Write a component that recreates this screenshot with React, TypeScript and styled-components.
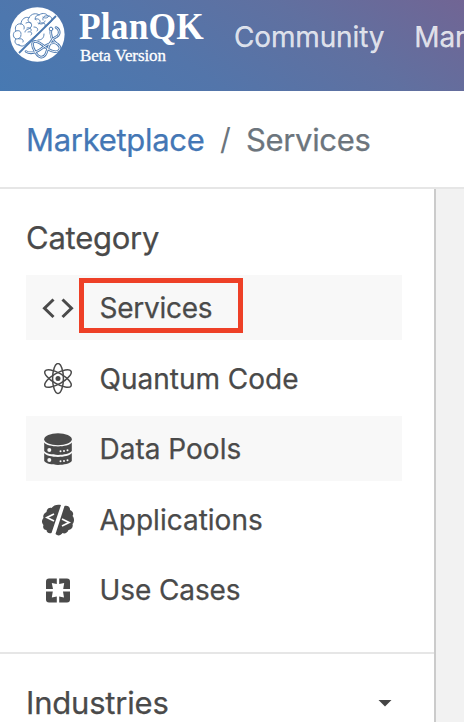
import React from 'react';
import styled, { createGlobalStyle } from 'styled-components';

const GlobalStyle = createGlobalStyle`
  * { box-sizing: border-box; }
  body { margin: 0; background: #fff; overflow: hidden; font-family: Inter, "Liberation Sans", sans-serif; color: #4a4a4a; }
`;

const Page = styled.div`
  width: 464px;
  height: 722px;
  overflow: hidden;
  display: flex;
  flex-direction: column;
`;

const Header = styled.header`
  height: 91px;
  flex: none;
  display: flex;
  align-items: flex-start;
  padding: 6px 0 0 9px;
  overflow: hidden;
  background: linear-gradient(34deg, #4779b2 0%, #5375aa 38%, #6070a0 68%, #716594 100%);
`;

const Brand = styled.div`
  width: 225px;
  flex: none;
  display: flex;
  color: #fff;
`;

const BrandText = styled.div`
  display: flex;
  flex-direction: column;
  padding-left: 14px;
  font-family: "Liberation Serif", serif;
  white-space: nowrap;
`;

const BrandName = styled.div`
  font-size: 38px;
  line-height: 40px;
  height: 40px;
  font-weight: 700;
  letter-spacing: 0.2px;
  transform: scaleX(0.93);
  transform-origin: left;
`;

const BrandNote = styled.div`
  padding-left: 1px;
  font-size: 17px;
  line-height: 20px;
  letter-spacing: -0.1px;
  -webkit-text-stroke: 0.3px #fff;
`;

const Label = styled.span<{ $size?: number; $spacing?: number }>`
  font-size: ${p => p.$size ?? 28}px;
  letter-spacing: ${p => p.$spacing ?? 0}px;
  -webkit-text-stroke: 0.25px currentColor;
  white-space: nowrap;
`;

const Nav = styled.nav`
  display: flex;
  flex: none;
  gap: 30px;
  line-height: 62px;
  color: rgba(255, 255, 255, 0.8);
`;

const Breadcrumb = styled.div`
  height: 98px;
  flex: none;
  display: flex;
  align-items: center;
  padding: 0 0 0 26px;
  border-bottom: 2px solid #e6e6e6;
  color: #6c757d;
`;

const Crumb = styled.a`
  width: 194px;
  color: #4477b5;
`;

const Slash = styled.span`
  width: 26px;
  font-size: 30px;
`;

const Body = styled.main`
  flex: 1;
  min-height: 0;
  display: flex;
  background: #f2f2f2;
`;

const Sidebar = styled.aside`
  width: 436px;
  border-right: 2px solid #cbcbcb;
  background: #fff;
`;

const CategorySection = styled.section`
  height: 465px;
  padding: 27px 32px 0 26px;
  border-bottom: 2px solid #e6e6e6;
`;

const Heading = styled.h2`
  margin: 0;
  height: 59px;
  line-height: 44px;
  font-weight: 400;
`;

const Menu = styled.ul`
  margin: 0;
  padding: 0;
  list-style: none;
  display: flex;
  flex-direction: column;
  gap: 5.5px;
`;

const MenuItem = styled.li<{ $shaded?: boolean }>`
  position: relative;
  height: 65px;
  display: flex;
  align-items: center;
  padding-left: 16px;
  padding-top: ${p => (p.$shaded ? 0 : 1)}px;
  background: ${p => (p.$shaded ? '#f8f8f8' : 'transparent')};
`;

const IconSlot = styled.span`
  width: 57.5px;
  height: 32px;
  display: flex;
`;

const Highlight = styled.span`
  position: absolute;
  left: 53px;
  top: 3px;
  width: 164px;
  height: 55px;
  border: 5px solid #ee4027;
`;

const Industries = styled.section`
  display: flex;
  justify-content: space-between;
  align-items: center;
  height: 97px;
  padding: 0 42px 0 26px;
`;

const Logo = () => (
  <svg width="56" height="57" viewBox="0 0 56 57" fill="none" stroke="#4a78b0" strokeWidth="0.9" strokeLinecap="round">
    <circle cx="28.3" cy="28.5" r="27.3" fill="#fff" stroke="none" />
    <path d="M10 47 47 10" stroke="#4a78b0" strokeWidth="1.8" strokeLinecap="butt" />
    <path d="M10 39c-4 0-5-4-3-6-4-2-3-7 0-8-2-4 1-8 5-7 0-5 5-8 8-6 2-5 8-5 10-3 4-3 8-1 9 1 4 0 5 4 3 6L17 38c-2 2-4 3-7 1Z" />
    <path d="M7 25c3-1 5 0 5 3m-5 5c3 0 5-1 5-4m0-11c2 0 4 2 3 5m5-11c-2 2-1 4 2 5m8-8c-3 0-5 3-3 5m12-4c-3-1-6 1-5 4m-17 3c4-2 7 1 5 4s-6 2-6 5m10-13c4-1 7 2 4 5m4-7c2 2 5 1 6-1m-8 7c3-1 5 1 4 3m-17 6c3-1 5 1 3 3m3-8c3 0 5 2 3 4M10 33c3-1 5 1 4 3m15-19c3 2 6 1 7-2M18 22c3-1 5 1 4 3" />
    <path strokeWidth="2.6" d="M17 45.500c5 3 12 0 17-4 7-5 12-6 15-3 4 4 1 8-4 7-7-1-12-9-18-10-5-1-4 5-1 10 3 6 8 8 11 2 3-8 5-15 11-17 4-3 2-8-1-9M42 22c-1 7 0 12 6 16" />
    <path stroke="#fff" strokeWidth="0.9" d="M17 45.500c5 3 12 0 17-4 7-5 12-6 15-3 4 4 1 8-4 7-7-1-12-9-18-10-5-1-4 5-1 10 3 6 8 8 11 2 3-8 5-15 11-17 4-3 2-8-1-9M42 22c-1 7 0 12 6 16" />
    <path d="M29 34c4 0 6-2 6-6" />
    <circle cx="42" cy="23" r="1.8" fill="#fff" />
  </svg>
);

const CodeIcon = () => (
  <svg width="32" height="32" viewBox="0 0 32 32" fill="none" stroke="currentColor" strokeWidth="3">
    <path d="M11.500 7.500 2.500 16.200 11.500 25M20.500 7.500l9 8.700-9 8.800" />
  </svg>
);

const AtomIcon = () => (
  <svg width="32" height="32" viewBox="0 0 32 32" fill="none" stroke="currentColor" strokeWidth="1.5">
    <ellipse cx="16" cy="15.500" rx="5.400" ry="15" />
    <ellipse cx="16" cy="15.500" rx="5.400" ry="15" transform="rotate(60 16 15.500)" />
    <ellipse cx="16" cy="15.500" rx="5.400" ry="15" transform="rotate(120 16 15.500)" />
    <circle cx="16" cy="15.500" r="2.500" fill="currentColor" stroke="none" />
  </svg>
);

const DatabaseIcon = () => (
  <svg width="32" height="32" viewBox="0 0 32 32" fill="currentColor">
    <ellipse cx="16" cy="6.200" rx="13.800" ry="6" />
    <path d="M2.200 9.500c4 5.200 23.600 5.200 27.600 0v8.500c-4 5.200-23.600 5.200-27.600 0ZM2.200 20c4 5.200 23.600 5.200 27.600 0v8c-4 5.200-23.600 5.200-27.600 0Z" />
    <g fill="#f8f8f8">
      <circle cx="7.300" cy="17.100" r="2" /><circle cx="7.300" cy="27" r="2" />
      <circle cx="18.500" cy="18.300" r="1" /><circle cx="22" cy="18" r="1" /><circle cx="25.500" cy="17.300" r="1" />
      <circle cx="18.500" cy="28.300" r="1" /><circle cx="22" cy="28" r="1" /><circle cx="25.500" cy="27.300" r="1" />
    </g>
  </svg>
);

const BrainCodeIcon = () => (
  <svg width="32" height="32" viewBox="0 0 32 32" fill="none">
    <path fill="currentColor" d="M19 1 9.500 29c-3 1-5-1-5-3-3 0-4-3-3-5-2-2-2-5 0-7-1-3 1-5 3-6 0-3 3-5 5-4 2-3 6-4 9.500-3ZM22.500 2c3-1 6 1 5.500 4 3 1 4 4 2.500 6 2 2 2 6 0 8 1 3-1 6-4 6-1 3-4 4-6 3-2 3-5 3-7 1Z" />
    <path stroke="#fff" strokeWidth="1.800" d="m12 10-7 3.500 7 3.500M20 15l7 3.500-7 3.500" />
  </svg>
);

const UseCaseIcon = () => (
  <svg width="32" height="32" viewBox="0 0 32 32">
    <rect x="4" y="4.500" width="24" height="24" rx="3" fill="currentColor" />
    <path fill="#fff" d="M14.800 4h2.400v6l5-1-1 6h7.300v2.400H21l1 6-4.800-1v6.600h-2.400v-6.600l-5 1 1-6H3.500V15H11l-1.200-6 5 1Z" />
  </svg>
);

const Caret = () => (
  <svg width="14" height="8" viewBox="0 0 14 8"><path d="M.5 1h13L7 7.500Z" fill="#444" /></svg>
);

const entries = [
  { label: 'Services', icon: <CodeIcon />, spacing: -0.25, shaded: true },
  { label: 'Quantum Code', icon: <AtomIcon />, spacing: 0 },
  { label: 'Data Pools', icon: <DatabaseIcon />, spacing: 0, shaded: true },
  { label: 'Applications', icon: <BrainCodeIcon />, spacing: 0 },
  { label: 'Use Cases', icon: <UseCaseIcon />, spacing: -0.1 },
];

export default function App() {
  return (
    <Page>
      <GlobalStyle />
      <Header>
        <Brand>
          <Logo />
          <BrandText>
            <BrandName>PlanQK</BrandName>
            <BrandNote>Beta Version</BrandNote>
          </BrandText>
        </Brand>
        <Nav>
          <Label $spacing={-0.15}>Community</Label>
          <Label $spacing={-0.15}>Marketplace</Label>
        </Nav>
      </Header>
      <Breadcrumb>
        <Crumb><Label $size={31} $spacing={-0.3}>Marketplace</Label></Crumb>
        <Slash>/</Slash>
        <Label $size={31} $spacing={-0.35}>Services</Label>
      </Breadcrumb>
      <Body>
        <Sidebar>
          <CategorySection>
            <Heading><Label $size={31} $spacing={-0.25}>Category</Label></Heading>
            <Menu>
              {entries.map((entry, i) => (
                <MenuItem key={entry.label} $shaded={entry.shaded}>
                  <IconSlot>{entry.icon}</IconSlot>
                  <Label $spacing={entry.spacing}>{entry.label}</Label>
                  {i === 0 && <Highlight />}
                </MenuItem>
              ))}
            </Menu>
          </CategorySection>
          <Industries>
            <Label $size={31} $spacing={-0.2}>Industries</Label>
            <Caret />
          </Industries>
        </Sidebar>
      </Body>
    </Page>
  );
}
